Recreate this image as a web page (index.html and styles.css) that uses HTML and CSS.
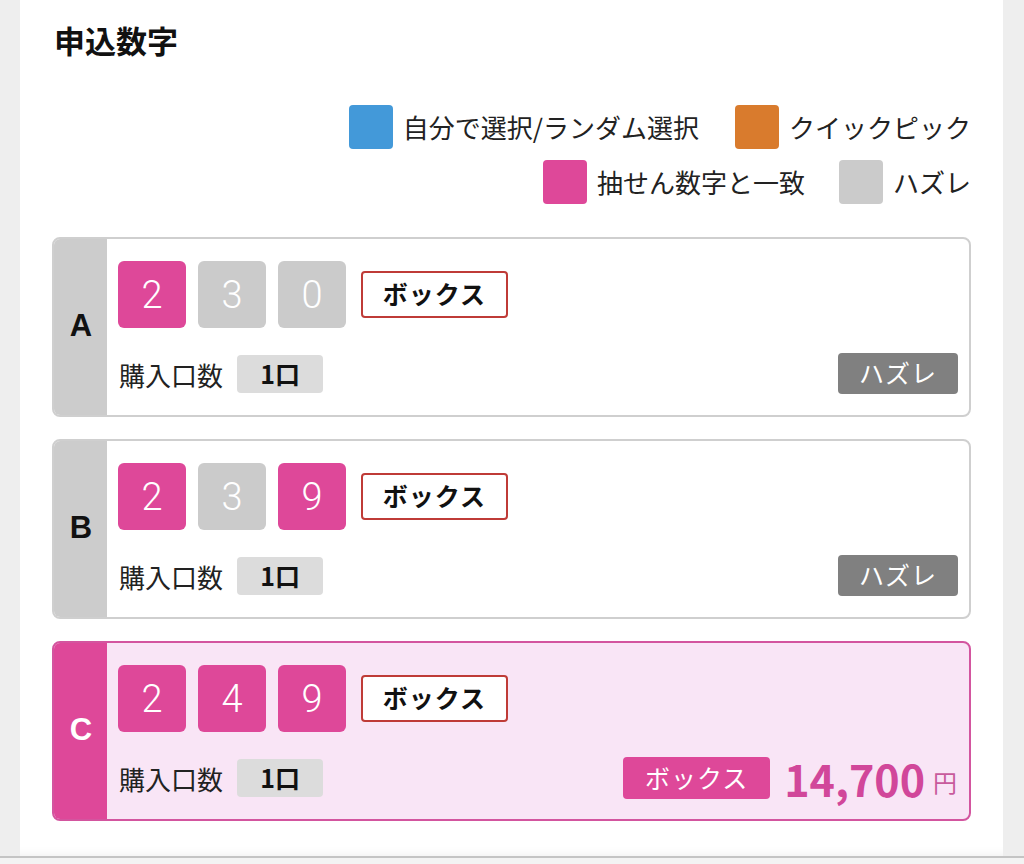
FILE: index.html
```html
<!DOCTYPE html>
<html lang="ja">
<head>
<meta charset="utf-8">
<link rel="stylesheet" href="styles.css">
</head>
<body>
<div class="page">
  <div class="panel">
    <h2 class="title">申込数字</h2>
    <div class="legend">
      <div class="legend-row">
        <div class="legend-item"><span class="swatch sw-blue"></span><span>自分で選択/ランダム選択</span></div>
        <div class="legend-item"><span class="swatch sw-orange"></span><span>クイックピック</span></div>
      </div>
      <div class="legend-row row2">
        <div class="legend-item"><span class="swatch sw-pink"></span><span>抽せん数字と一致</span></div>
        <div class="legend-item"><span class="swatch sw-gray"></span><span>ハズレ</span></div>
      </div>
    </div>

    <div class="cards">
      <div class="card">
        <div class="card-label">A</div>
        <div class="card-body">
          <div class="nums">
            <span class="num hit">2</span>
            <span class="num miss">3</span>
            <span class="num miss">0</span>
            <span class="type">ボックス</span>
          </div>
          <div class="info">
            <div class="qty"><span>購入口数</span><span class="qty-badge">1口</span></div>
            <span class="result-miss">ハズレ</span>
          </div>
        </div>
      </div>

      <div class="card">
        <div class="card-label">B</div>
        <div class="card-body">
          <div class="nums">
            <span class="num hit">2</span>
            <span class="num miss">3</span>
            <span class="num hit">9</span>
            <span class="type">ボックス</span>
          </div>
          <div class="info">
            <div class="qty"><span>購入口数</span><span class="qty-badge">1口</span></div>
            <span class="result-miss">ハズレ</span>
          </div>
        </div>
      </div>

      <div class="card win">
        <div class="card-label">C</div>
        <div class="card-body">
          <div class="nums">
            <span class="num hit">2</span>
            <span class="num hit">4</span>
            <span class="num hit">9</span>
            <span class="type">ボックス</span>
          </div>
          <div class="info">
            <div class="qty"><span>購入口数</span><span class="qty-badge">1口</span></div>
            <div class="prize">
              <span class="prize-type">ボックス</span>
              <span class="prize-amount">14,700</span>
              <span class="prize-yen">円</span>
            </div>
          </div>
        </div>
      </div>
    </div>
  </div>
</div>
</body>
</html>
```

FILE: styles.css
```css
html, body {
  margin: 0;
  padding: 0;
}
body {
  background: #f3f3f3;
  font-family: "Noto Sans CJK JP", "Noto Sans", sans-serif;
  color: #222;
  width: 1024px;
  height: 864px;
  overflow: hidden;
}
.page {
  background: #eeeeee;
  height: 856px;
  border-bottom: 2px solid #c4c4c4;
}
.panel {
  margin-left: 20px;
  width: 983px;
  height: 856px;
  background: #ffffff;
  box-sizing: border-box;
  padding: 0 32px 0 32px;
  box-shadow: inset 0 -12px 10px -10px rgba(0,0,0,0.06);
}
.title {
  margin: 0;
  padding-top: 21px;
  font-size: 31px;
  line-height: 38px;
  font-weight: 700;
  color: #111;
  padding-left: 2px;
}
.legend {
  margin-top: 46px;
  display: flex;
  flex-direction: column;
  align-items: flex-end;
  gap: 11px;
}
.legend-row {
  display: flex;
  gap: 36px;
}
.legend-row.row2 {
  gap: 34px;
}
.legend-item {
  display: flex;
  align-items: center;
  gap: 10px;
  font-size: 26px;
  line-height: 44px;
  color: #222;
}
.swatch {
  width: 44px;
  height: 44px;
  border-radius: 4px;
  display: block;
}
.sw-blue { background: #4399d9; }
.sw-orange { background: #d97b2d; }
.sw-pink { background: #de4899; }
.sw-gray { background: #cbcbcb; }

.cards {
  margin-top: 33px;
  display: flex;
  flex-direction: column;
  gap: 22px;
}
.card {
  display: flex;
  height: 180px;
  box-sizing: border-box;
  border: 2px solid #cfcfcf;
  border-radius: 8px;
  overflow: hidden;
  background: #fff;
}
.card-label {
  width: 52px;
  background: #cccccc;
  display: flex;
  align-items: center;
  justify-content: center;
  font-family: "Liberation Sans", Arial, sans-serif;
  font-weight: 700;
  font-size: 31px;
  color: #111;
  padding-bottom: 2px;
  padding-left: 1px;
}
.card-body {
  flex: 1;
  padding: 22px 11px 0 11px;
  display: flex;
  flex-direction: column;
}
.nums {
  display: flex;
  align-items: center;
  gap: 12px;
}
.num {
  width: 68px;
  height: 67px;
  border-radius: 6px;
  display: flex;
  align-items: center;
  justify-content: center;
  color: #fff;
  font-size: 38px;
  font-weight: 300;
  font-family: Roboto, "Liberation Sans", sans-serif;
  padding-top: 1px;
  box-sizing: border-box;
}
.num.hit { background: #de4899; }
.num.miss { background: #cbcbcb; }
.type {
  margin-left: 3px;
  width: 147px;
  height: 47px;
  box-sizing: border-box;
  border: 2px solid #bf3b37;
  border-radius: 4px;
  background: #fff;
  display: flex;
  align-items: center;
  justify-content: center;
  font-size: 25px;
  font-weight: 700;
  color: #111;
  letter-spacing: 1px;
  padding-bottom: 4px;
}
.info {
  margin-top: 25px;
  display: flex;
  align-items: center;
  justify-content: space-between;
  height: 42px;
}
.qty {
  display: flex;
  align-items: center;
  gap: 14px;
  font-size: 26px;
  color: #222;
  padding-left: 1px;
}
.qty-badge {
  width: 86px;
  height: 38px;
  background: #dcdcdc;
  border-radius: 4px;
  display: flex;
  align-items: center;
  justify-content: center;
  font-weight: 700;
  font-size: 25px;
  color: #111;
  box-sizing: border-box;
  padding-bottom: 2px;
}
.result-miss {
  width: 120px;
  height: 41px;
  background: #808080;
  color: #fff;
  border-radius: 4px;
  display: flex;
  align-items: center;
  justify-content: center;
  font-size: 25px;
  letter-spacing: 1px;
  margin-top: -2px;
  box-sizing: border-box;
  padding-bottom: 2px;
}
.card.win {
  background: #f9e5f6;
  border-color: #d3559f;
}
.card.win .card-label {
  background: #de4899;
  color: #fff;
  font-weight: 700;
  font-size: 31px;
}
.prize {
  display: flex;
  align-items: center;
}
.prize-type {
  width: 147px;
  height: 42px;
  background: #de4899;
  color: #fff;
  border-radius: 4px;
  display: flex;
  align-items: center;
  justify-content: center;
  font-size: 25px;
  letter-spacing: 1px;
  box-sizing: border-box;
  padding-bottom: 3px;
}
.prize-amount {
  margin-left: 14px;
  font-size: 43px;
  font-weight: 700;
  color: #d1479a;
  line-height: 42px;
}
.prize-yen {
  margin-left: 8px;
  margin-top: 6px;
  font-size: 24px;
  color: #c85a9c;
  padding-right: 1px;
}
```
